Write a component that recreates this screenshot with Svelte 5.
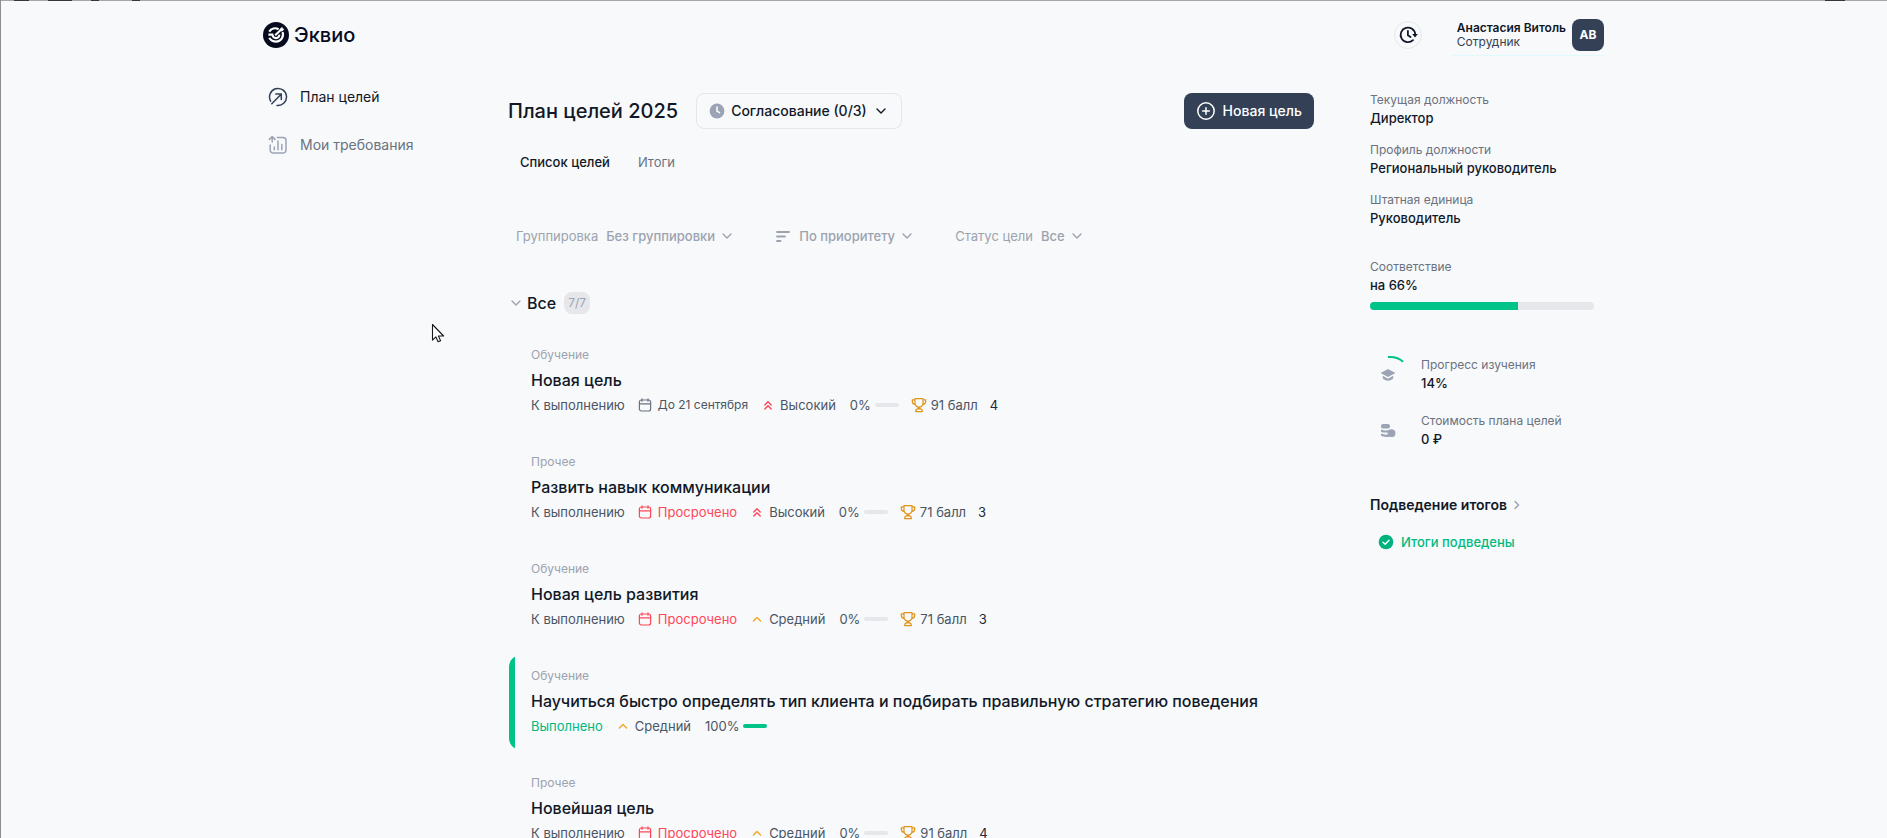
<script>
  const goals = [
    { type: 'Обучение', title: 'Новая цель', status: 'К выполнению', due: 'До 21 сентября', priority: 'Высокий', progress: 0, points: '91 балл', count: 4 },
    { type: 'Прочее', title: 'Развить навык коммуникации', status: 'К выполнению', due: 'Просрочено', late: true, priority: 'Высокий', progress: 0, points: '71 балл', count: 3 },
    { type: 'Обучение', title: 'Новая цель развития', status: 'К выполнению', due: 'Просрочено', late: true, priority: 'Средний', progress: 0, points: '71 балл', count: 3 },
    { type: 'Обучение', title: 'Научиться быстро определять тип клиента и подбирать правильную стратегию поведения', status: 'Выполнено', done: true, priority: 'Средний', progress: 100 },
    { type: 'Прочее', title: 'Новейшая цель', status: 'К выполнению', due: 'Просрочено', late: true, priority: 'Средний', progress: 0, points: '91 балл', count: 4 },
  ];
  const facts = [
    { label: 'Текущая должность', value: 'Директор' },
    { label: 'Профиль должности', value: 'Региональный руководитель' },
    { label: 'Штатная единица', value: 'Руководитель' },
  ];
  const match = 66;
</script>

{#snippet chevron()}
  <svg class="chevron" width="16" height="16" viewBox="0 0 16 16" aria-hidden="true"><path d="M4 6l4 4 4-4" /></svg>
{/snippet}

<div class="page">
  <div class="edge" aria-hidden="true"></div>
  <div class="shell">
    <header>
      <a class="brand" href="#home">
        <svg width="26" height="26" viewBox="0 0 26 26" aria-hidden="true">
          <circle cx="13" cy="13" r="13" fill="#060b1d" />
          <g fill="none" stroke="#fff" stroke-width="2.1">
            <path d="M6.2 9.6C8.3 6.4 12.2 5.5 15.6 7.2" />
            <path d="M19.6 10C21.200 15 17.800 19.600 13.200 19.600 10.200 19.600 7.800 18.200 6.200 15.800" />
            <path d="M5.400 12.600H9.400C9.800 15 11.400 16.200 13.200 16.100 15.200 16 16.400 14.400 16.300 12.600" />
            <path d="M12.200 13.200L18.800 7" />
          </g>
          <path d="M16.600 7.200l2.600-2.400.5 1.700 1.700.5-2.300 2.400-1.900-.3z" fill="#fff" />
        </svg>
        <span>Эквио</span>
      </a>
      <div class="account">
        <button class="history" aria-label="История">
          <svg width="20" height="20" viewBox="0 0 20 20" aria-hidden="true">
            <path d="M15 15.1A7.3 7.3 0 1 1 17.2 9.4M9.9 6v4.2l2.6 1.8" fill="none" stroke="#111827" stroke-width="1.8" stroke-linecap="round" stroke-linejoin="round" />
            <path d="M14.2 9h5.6L17 12.6z" fill="#111827" />
          </svg>
        </button>
        <button class="user">
          <span class="who"><b>Анастасия Витоль</b><span>Сотрудник</span></span>
          <span class="avatar">АВ</span>
        </button>
      </div>
    </header>

    <div class="columns">
      <nav>
        <a class="active" href="#plan">
          <svg width="20" height="20" viewBox="0 0 20 20" fill="none" stroke="currentColor" stroke-width="1.5" stroke-linecap="round" stroke-linejoin="round" aria-hidden="true">
            <path d="M2.6 14.1A8.5 8.5 0 1 1 9 18.4M3.8 16.7L12.9 7.4M7.8 7h5.5v5.5" />
          </svg>
          План целей
        </a>
        <a href="#requirements">
          <svg width="20" height="20" viewBox="0 0 20 20" fill="none" stroke="currentColor" stroke-width="1.5" stroke-linecap="round" stroke-linejoin="round" aria-hidden="true">
            <path d="M9.3 2.6H15a3 3 0 0 1 3 3v9.5a3 3 0 0 1-3 3H5.2a3 3 0 0 1-3-3V10M4.2 7V1.8M1.4 4.4l2.8-2.8L7 4.4M6.3 12v2.8M10 6v8.8M13.8 9.4v5.4" />
          </svg>
          Мои требования
        </a>
      </nav>

      <main>
        <div class="head">
          <h1>План целей 2025</h1>
          <button class="stage">
            <svg width="16" height="16" viewBox="0 0 16 16" aria-hidden="true">
              <circle cx="8" cy="8" r="7.4" fill="#9ca3b4" />
              <path d="M8 4v4.2l2.5 1.4" fill="none" stroke="#fff" stroke-width="1.5" stroke-linecap="round" stroke-linejoin="round" />
            </svg>
            Согласование (0/3)
            {@render chevron()}
          </button>
          <button class="create">
            <svg width="20" height="20" viewBox="0 0 20 20" fill="none" stroke="#fff" stroke-width="1.5" stroke-linecap="round" aria-hidden="true">
              <circle cx="10" cy="10" r="8.2" /><path d="M10 6.7v6.6M6.7 10h6.6" />
            </svg>
            Новая цель
          </button>
        </div>

        <div class="tabs" role="tablist">
          <button role="tab" aria-selected="true">Список целей</button>
          <button role="tab" aria-selected="false">Итоги</button>
        </div>

        <div class="filters">
          <label>Группировка
            <span class="pick"><select><option>Без группировки</option></select>{@render chevron()}</span>
          </label>
          <label aria-label="Сортировка">
            <svg width="16" height="16" viewBox="0 0 16 16" fill="none" stroke="currentColor" stroke-width="1.8" stroke-linecap="round" aria-hidden="true"><path d="M2 4h12M2 8.5h8M2 13h3.5" /></svg>
            <span class="pick"><select><option>По приоритету</option></select>{@render chevron()}</span>
          </label>
          <label>Статус цели
            <span class="pick"><select><option>Все</option></select>{@render chevron()}</span>
          </label>
        </div>

        <h2>
          <button class="group">{@render chevron()}Все</button>
          <span class="badge">7/7</span>
        </h2>

        <div class="goals">
          {#each goals as g}
            <article class:done={g.done}>
              <div class="type">{g.type}</div>
              <h3>{g.title}</h3>
              <div class="meta">
                <span class="status">{g.status}</span>
                {#if g.due}
                  <span class="due" class:late={g.late}>
                    <svg width="16" height="16" viewBox="0 0 16 16" fill="none" stroke="currentColor" stroke-width="1.2" stroke-linecap="round" aria-hidden="true">
                      <rect x="2.4" y="3" width="11.2" height="11" rx="2" /><path d="M2.4 6.8h11.2M5 1.8v2.4M11 1.8v2.4" />
                    </svg>
                    <span>{g.due}</span>
                  </span>
                {/if}
                <span class="priority">
                  <svg class:high={g.priority === 'Высокий'} width="16" height="16" viewBox="0 0 16 16" fill="none" stroke="currentColor" stroke-width="1.4" stroke-linecap="round" stroke-linejoin="round" aria-hidden="true">
                    {#if g.priority === 'Высокий'}
                      <path d="M4.8 8L8 4.8 11.2 8M4.8 12L8 8.8l3.2 3.2" />
                    {:else}
                      <path d="M4.4 10L8 6.4l3.6 3.6" />
                    {/if}
                  </svg>
                  {g.priority}
                </span>
                <span class="progress">{g.progress}%<i><em style="width: {g.progress}%"></em></i></span>
                {#if g.points}
                  <span class="points">
                    <svg width="16" height="16" viewBox="0 0 16 16" fill="none" stroke="#e0941a" stroke-width="1.2" stroke-linejoin="round" aria-hidden="true">
                      <path d="M4 1.6h8v4.6a4 4 0 0 1-8 0zM4 2.8H1.3v1.4c0 2 1.2 3 2.9 3.2M12 2.8h2.7v1.4c0 2-1.2 3-2.9 3.2M8 10.2v1.6M6.6 11.4h2.8M4.6 14.6c0-1.6.8-2.6 1.8-2.8h3.2c1 .2 1.8 1.2 1.8 2.8z" />
                    </svg>
                    {g.points}
                  </span>
                  <span class="count">{g.count}</span>
                {/if}
              </div>
            </article>
          {/each}
        </div>
      </main>

      <aside>
        <dl>
          {#each facts as f}
            <div><dt>{f.label}</dt><dd>{f.value}</dd></div>
          {/each}
        </dl>
        <dl class="match">
          <div><dt>Соответствие</dt><dd>на {match}%</dd></div>
        </dl>
        <div class="bar" role="progressbar" aria-label="Соответствие" aria-valuenow={match}><div style="width: {match}%"></div></div>

        <dl class="stats">
          <div class="stat">
            <svg width="36" height="40" viewBox="0 0 36 40" aria-hidden="true">
              <path d="M18 3Q28 2.400 33 7.800" fill="none" stroke="#00c389" stroke-width="2" />
              <path d="M10.6 19L18 15l7.4 4L18 23z" fill="#9ca3b4" />
              <path d="M12.8 21.8v2.6Q18 29.2 23.2 24.4v-2.6L18 24.8z" fill="#9ca3b4" />
            </svg>
            <div><dt>Прогресс изучения</dt><dd>14%</dd></div>
          </div>
          <div class="stat">
            <svg width="36" height="40" viewBox="0 0 36 40" fill="#9ca3b4" aria-hidden="true">
              <rect x="11" y="14" width="9" height="4.600" rx="2" />
              <path d="M11 19.600c2.600 1.200 6 1.200 9 .2-1 .8-1.600 1.600-1.800 2.600-2.600.4-5.200.2-7.200-.7zM11 23.600c2.400 1 4.800 1.200 7.200.9.200 1 .6 1.800 1.200 2.300-3 .5-6.800.2-8.400-1.200z" />
              <circle cx="21.500" cy="23.200" r="3.900" />
            </svg>
            <div><dt>Стоимость плана целей</dt><dd>0 ₽</dd></div>
          </div>
        </dl>

        <a class="summary" href="#summary">
          Подведение итогов
          <svg width="16" height="16" viewBox="0 0 16 16" fill="none" stroke="#9ca3b4" stroke-width="1.4" stroke-linecap="round" stroke-linejoin="round" aria-hidden="true"><path d="M6 4.400l3.600 3.600L6 11.600" /></svg>
        </a>
        <p class="result">
          <svg width="16" height="16" viewBox="0 0 16 16" aria-hidden="true">
            <circle cx="8" cy="8" r="7.300" fill="#00b37e" />
            <path d="M5 8.200l2.200 2.100L11 6.300" fill="none" stroke="#fff" stroke-width="1.400" stroke-linecap="round" stroke-linejoin="round" />
          </svg>
          Итоги подведены
        </p>
      </aside>
    </div>
  </div>

  <svg class="pointer" width="14" height="20" viewBox="0 0 14 20" aria-hidden="true">
    <path d="M1.500 1.500v15.600l3.400-3.200 2.200 4.900 2.500-1.100-2.200-4.700h5.200z" fill="#fff" stroke="#16181d" stroke-width="1.100" stroke-linejoin="round" />
  </svg>
</div>

<style>
  :global(body) {
    background: #f7f9fb;
    overflow: hidden;
  }
  .page {
    position: relative;
    height: 100vh;
    box-sizing: border-box;
    overflow: hidden;
    border-left: 1px solid #8e8d91;
    background: #f7f9fb;
    color: #111827;
    font-family: Inter, sans-serif;
    font-size: 13px;
    line-height: 20px;
  }
  .edge {
    height: 1px;
    background:
      linear-gradient(#38363b, #38363b) 13px 0 / 15px 1px no-repeat,
      linear-gradient(#38363b, #38363b) 47px 0 / 24px 1px no-repeat,
      linear-gradient(#38363b, #38363b) 90px 0 / 8px 1px no-repeat,
      linear-gradient(#38363b, #38363b) 131px 0 / 8px 1px no-repeat,
      linear-gradient(#38363b, #38363b) right 42px top 0 / 20px 1px no-repeat,
      #a6a5a9;
  }
  .shell {
    max-width: 1342px;
    margin: 0 auto;
    padding-right: 20px;
  }
  button {
    border: 0;
    padding: 0;
    background: none;
    color: inherit;
    font: inherit;
    cursor: pointer;
  }
  a {
    color: inherit;
    text-decoration: none;
  }
  svg {
    display: block;
    flex: none;
  }
  h1, h2, h3, p, dl, dd {
    margin: 0;
  }
  header {
    display: flex;
    justify-content: space-between;
    align-items: center;
    height: 68px;
  }
  .brand {
    display: flex;
    align-items: center;
    gap: 5px;
    color: #060b1d;
    font-size: 20px;
    font-weight: 500;
  }
  .account {
    display: flex;
    align-items: center;
    gap: 30px;
    padding-right: 1px;
  }
  .history {
    display: grid;
    place-items: center;
    width: 28px;
    height: 28px;
    border: 1px solid #e5e7eb;
    border-radius: 50%;
  }
  .user {
    display: flex;
    align-items: center;
    gap: 6px;
    padding: 4px 0 4px 5px;
    border-bottom: 1px solid #dffafd;
    text-align: left;
  }
  .who {
    display: grid;
    color: #374151;
    font-size: 12px;
    line-height: 14px;
  }
  .who b {
    color: #111827;
    font-weight: 600;
  }
  .avatar {
    width: 32px;
    border-radius: 8px;
    background: #334056;
    color: #fff;
    font-size: 12px;
    font-weight: 700;
    line-height: 32px;
    text-align: center;
  }
  .columns {
    display: grid;
    grid-template-columns: 189px minmax(0, 1fr) 235px;
    column-gap: 56px;
  }
  nav {
    display: grid;
    align-content: start;
    gap: 24px;
    padding: 16px 0 0 5px;
    color: #6b7280;
    font-size: 14px;
    line-height: 24px;
  }
  nav a {
    display: flex;
    align-items: center;
    gap: 12px;
  }
  nav svg {
    color: #9ca3b4;
  }
  nav .active {
    color: #111827;
  }
  .active svg {
    color: #334056;
  }
  .head {
    display: flex;
    align-items: center;
    gap: 18px;
    padding-top: 24px;
  }
  h1 {
    font-size: 20px;
    font-weight: 500;
    line-height: 28px;
  }
  .stage,
  .create {
    display: flex;
    align-items: center;
    height: 36px;
    box-sizing: border-box;
    border-radius: 8px;
    font-size: 14px;
    font-weight: 500;
  }
  .stage {
    gap: 6px;
    padding: 0 12px;
    border: 1px solid #e3e7ea;
  }
  .create {
    gap: 7px;
    margin-left: auto;
    padding: 0 12px;
    background: #334056;
    color: #fff;
  }
  .chevron {
    fill: none;
    stroke: currentColor;
    stroke-width: 1.4;
    stroke-linecap: round;
    stroke-linejoin: round;
  }
  .tabs {
    display: flex;
    gap: 28px;
    padding: 23px 12px 0;
    color: #6b7280;
  }
  .tabs [aria-selected='true'] {
    color: #111827;
    font-weight: 500;
  }
  .filters {
    display: flex;
    gap: 40px;
    padding: 54px 8px 0;
    color: #9ca3af;
  }
  .filters label {
    display: flex;
    align-items: center;
    gap: 8px;
  }
  .pick {
    display: flex;
    align-items: center;
    gap: 4px;
  }
  select {
    appearance: none;
    margin: 0;
    padding: 0;
    border: 0;
    background: none;
    color: inherit;
    font: inherit;
    font-weight: 500;
  }
  h2 {
    display: flex;
    align-items: center;
    gap: 8px;
    padding: 45px 0 0;
    font-size: 16px;
    font-weight: 500;
    line-height: 24px;
  }
  .group {
    display: flex;
    align-items: center;
    gap: 3px;
  }
  .group .chevron {
    color: #9ca3af;
  }
  .badge {
    padding: 0 4px;
    border-radius: 8px;
    background: #e5e7eb;
    color: #9ca3af;
    font-size: 12px;
    font-weight: 400;
    line-height: 22px;
  }
  .goals {
    display: grid;
    gap: 12px;
    margin: 19px 1px 0;
  }
  article {
    padding: 12px 22px 14px;
    border-radius: 12px;
  }
  article.done {
    background: linear-gradient(90deg, #00c389 6px, transparent 6px);
  }
  .type {
    color: #9ca3af;
    font-size: 12px;
    line-height: 18px;
  }
  h3 {
    margin: 4px 0 3px;
    font-size: 16px;
    font-weight: 500;
    line-height: 24px;
  }
  .meta,
  .meta > span {
    display: flex;
    align-items: center;
  }
  .meta {
    gap: 12px;
    color: #4b5563;
  }
  .meta > span {
    gap: 4px;
  }
  .meta .due {
    gap: 5px;
    color: #6b7280;
  }
  .due span {
    color: #4b5563;
    font-size: 12px;
  }
  .meta .late,
  .late span {
    color: #ff4757;
    font-size: 13px;
  }
  .done .status {
    color: #00b981;
  }
  .priority svg {
    color: #f5a524;
  }
  .priority .high {
    color: #ff4757;
  }
  .meta .progress {
    padding-left: 2px;
  }
  .progress i {
    width: 24px;
    height: 4px;
    border-radius: 2px;
    overflow: hidden;
    background: #e5e7eb;
  }
  .progress em {
    display: block;
    height: 4px;
    background: #00c389;
  }
  .count {
    color: #1f2937;
  }
  aside {
    padding-top: 22px;
  }
  dl {
    display: grid;
    gap: 14px;
  }
  dt {
    color: #6b7280;
    font-size: 12px;
    line-height: 18px;
  }
  dd {
    font-weight: 500;
    line-height: 18px;
  }
  .match {
    margin-top: 31px;
  }
  .bar {
    height: 8px;
    margin: 8px 11px 0 0;
    border-radius: 4px;
    overflow: hidden;
    background: #e5e7eb;
  }
  .bar div {
    height: 8px;
    background: #00c389;
  }
  .stats {
    gap: 16px;
    margin-top: 44px;
  }
  .stat {
    display: flex;
    align-items: center;
    gap: 15px;
  }
  .stat dt,
  .stat dd {
    line-height: 19px;
  }
  .summary {
    display: flex;
    align-items: center;
    gap: 2px;
    margin-top: 45px;
    font-size: 14px;
    font-weight: 600;
  }
  .result {
    display: flex;
    align-items: center;
    gap: 7px;
    margin-top: 17px;
    padding-left: 8px;
    color: #00b981;
    font-weight: 500;
  }
  .pointer {
    position: absolute;
    left: 430px;
    top: 323px;
  }
</style>
